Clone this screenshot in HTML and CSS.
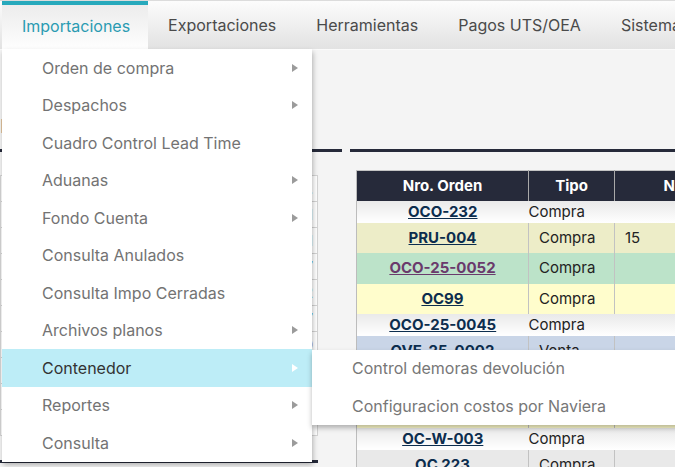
FILE: index.html
```html
<!DOCTYPE html>
<html lang="es">
<head>
<meta charset="utf-8">
<title>Importaciones</title>
<link rel="stylesheet" href="styles.css">
</head>
<body>
<nav class="topbar">
  <ul class="tabs">
    <li class="tab tab-active">
      <span class="tab-label">Importaciones</span>
      <ul class="menu">
        <li class="menu-item"><span>Orden de compra</span><i class="arrow"></i></li>
        <li class="menu-item"><span>Despachos</span><i class="arrow"></i></li>
        <li class="menu-item"><span>Cuadro Control Lead Time</span></li>
        <li class="menu-item"><span>Aduanas</span><i class="arrow"></i></li>
        <li class="menu-item"><span>Fondo Cuenta</span><i class="arrow"></i></li>
        <li class="menu-item"><span>Consulta Anulados</span></li>
        <li class="menu-item"><span>Consulta Impo Cerradas</span></li>
        <li class="menu-item"><span>Archivos planos</span><i class="arrow"></i></li>
        <li class="menu-item menu-item-hover"><span>Contenedor</span><i class="arrow"></i>
          <ul class="submenu">
            <li class="submenu-item">Control demoras devolución</li>
            <li class="submenu-item">Configuracion costos por Naviera</li>
          </ul>
        </li>
        <li class="menu-item"><span>Reportes</span><i class="arrow"></i></li>
        <li class="menu-item"><span>Consulta</span><i class="arrow"></i></li>
      </ul>
    </li>
    <li class="tab"><span class="tab-label">Exportaciones</span></li>
    <li class="tab"><span class="tab-label">Herramientas</span></li>
    <li class="tab"><span class="tab-label">Pagos UTS/OEA</span></li>
    <li class="tab"><span class="tab-label">Sistema</span></li>
  </ul>
</nav>

<main class="content">
  <section class="left-panel">
    <div class="panel-head"><h2 class="panel-title">Resumen importación</h2></div>
    <table class="side-table">
      <tr><td>Estado</td><td class="side-val">Cant.</td></tr>
      <tr><td>Abiertas</td><td class="side-val">1</td></tr>
      <tr><td>En tránsito</td><td class="side-val">1</td></tr>
      <tr><td>Arribadas</td><td class="side-val">7</td></tr>
      <tr><td>Nacionalizadas</td><td class="side-val">2</td></tr>
      <tr><td>Cerradas</td><td class="side-val">7</td></tr>
      <tr><td>Anuladas</td><td class="side-val side-red">0</td></tr>
      <tr><td>&nbsp;</td><td></td></tr>
      <tr><td>&nbsp;</td><td></td></tr>
      <tr><td>&nbsp;</td><td></td></tr>
    </table>
    <div class="panel-foot"></div>
  </section>

  <section class="right-panel">
    <div class="panel-head"></div>
    <table class="orders">
      <colgroup><col class="c1"><col class="c2"><col class="c3"></colgroup>
      <thead>
        <tr><th>Nro. Orden</th><th>Tipo</th><th>Nro. Factura</th></tr>
      </thead>
      <tbody>
        <tr class="row-plain"><td class="num"><a href="#">OCO-232</a></td><td>Compra</td><td></td></tr>
        <tr class="row-olive"><td class="num"><a href="#">PRU-004</a></td><td>Compra</td><td>15</td></tr>
        <tr class="row-mint"><td class="num"><a href="#" class="visited">OCO-25-0052</a></td><td>Compra</td><td></td></tr>
        <tr class="row-yellow"><td class="num"><a href="#">OC99</a></td><td>Compra</td><td></td></tr>
        <tr class="row-plain"><td class="num"><a href="#">OCO-25-0045</a></td><td>Compra</td><td></td></tr>
        <tr class="row-blue"><td class="num"><a href="#">OVE-25-0002</a></td><td>Venta</td><td></td></tr>
        <tr class="row-mint"><td class="num"><a href="#">OCO-25-0041</a></td><td>Compra</td><td></td></tr>
        <tr class="row-yellow"><td class="num"><a href="#">OCO-25-0038</a></td><td>Compra</td><td></td></tr>
        <tr class="row-plain"><td class="num"><a href="#">OC-W-003</a></td><td>Compra</td><td></td></tr>
        <tr class="row-gray"><td class="num"><a href="#">OC 223</a></td><td>Compra</td><td></td></tr>
      </tbody>
    </table>
  </section>
</main>
</body>
</html>
```

FILE: styles.css
```css
* { box-sizing: border-box; }

html, body {
  margin: 0;
  padding: 0;
}

body {
  background: #f4f4f4;
  font-family: Inter, "Noto Sans", "Liberation Sans", sans-serif;
  color: #222;
  width: 675px;
  height: 467px;
  overflow: hidden;
}

ul { list-style: none; margin: 0; padding: 0; }

/* ---------- top bar ---------- */
.topbar {
  position: relative;
  z-index: 10;
  height: 50px;
  border-top: 1px solid #dcdcdc;
  border-bottom: 1px solid #fafafa;
  background: linear-gradient(#fcfcfc, #e2e2e2);
  padding-left: 2px;
}

.tabs {
  display: flex;
  height: 100%;
  white-space: nowrap;
}

.tab {
  position: relative;
  display: flex;
  align-items: center;
  padding: 0 20px;
  font-size: 16px;
  color: #4a4a4a;
}

.tab-active {
  padding: 0 18px 0 20px;
  border-top: 4px solid #27a9bc;
  background: linear-gradient(#ececec, #fefefe);
  color: #2a9bb2;
}

.tab-active .tab-label { margin-top: -3px; }

/* ---------- dropdown ---------- */
.menu {
  position: absolute;
  top: 100%;
  left: 0;
  width: 310px;
  background: #fff;
  box-shadow: 1px 3px 5px rgba(0, 0, 0, 0.28);
  z-index: 20;
}

.menu-item {
  position: relative;
  display: flex;
  align-items: center;
  height: 37.5px;
  padding-left: 40px;
  font-size: 16px;
  color: #737373;
}

.arrow {
  margin-left: auto;
  margin-right: 14px;
  width: 0;
  height: 0;
  border-left: 6px solid #9b9b9b;
  border-top: 4px solid transparent;
  border-bottom: 4px solid transparent;
}

.menu-item-hover {
  background: #bdedf7;
  color: #333;
}

.menu-item-hover .arrow { border-left-color: #fff; }

.submenu {
  position: absolute;
  left: 100%;
  top: 0.5px;
  width: 400px;
  background: #fff;
  box-shadow: 0 3px 5px rgba(0, 0, 0, 0.28);
}

.submenu-item {
  display: flex;
  align-items: center;
  height: 37.5px;
  padding-left: 40px;
  font-size: 16px;
  color: #777;
}

/* ---------- content ---------- */
.content {
  display: flex;
}

.left-panel {
  flex: none;
  width: 342px;
}

.right-panel {
  flex: 1;
  min-width: 0;
  margin-left: 8px;
}

.panel-head {
  height: 102px;
  border-bottom: 3px solid #262a3a;
}

.panel-title {
  margin: 0;
  padding: 66px 0 0 0;
  font-size: 18px;
  font-weight: 400;
  color: #8a8a8a;
}

.side-table {
  margin-top: 23px;
  width: 318px;
  border-collapse: collapse;
  background: #fff;
  font-size: 14px;
}

.side-table td {
  height: 26px;
  border: 1px solid #d4d4d4;
  padding: 0 4px;
  text-align: left;
}

.side-val { color: #1d5f7a; text-align: right; }
.side-table td.side-val { text-align: right; }
.side-red { color: #8a1e1e; }

.panel-foot {
  margin-top: 24px;
  width: 318px;
  height: 3px;
  background: #262a3a;
}

/* ---------- orders table ---------- */
.orders {
  margin: 18px 0 0 6px;
  border-collapse: collapse;
  table-layout: fixed;
  width: 446px;
  font-size: 15px;
  border-left: 1px solid #bcbcbc;
  border-top: 1px solid #c4c4c4;
}

.c1 { width: 172px; }
.c2 { width: 86px; }
.c3 { width: 188px; }

.orders th {
  height: 30px;
  padding: 0;
  background: #262a3a;
  color: #fff;
  font-weight: 700;
  text-align: center;
  border-right: 1px solid #a9a9a9;
}

.orders td {
  line-height: 20px;
  text-align: left;
  white-space: nowrap;
}

.orders td.num { text-align: center; }

.orders a {
  color: #0c2d4e;
  font-weight: 700;
  text-decoration: underline;
}

.orders a.visited { color: #6a3a6c; }

.row-plain td {
  padding: 1px 0;
  height: 22px;
  background: linear-gradient(#e9e9e9, #ffffff);
}

.row-olive td,
.row-mint td,
.row-yellow td,
.row-blue td,
.row-gray td {
  padding: 5px 10px;
  height: 30.5px;
  border-right: 1px solid #c2c2c2;
}

.row-olive td { background: #ededc8; }
.row-mint td { background: #bce3c9; }
.row-yellow td { background: #fffdcc; }
.row-blue td { background: #c9d5e7; }
.row-gray td { background: #e9e9e9; }
```
